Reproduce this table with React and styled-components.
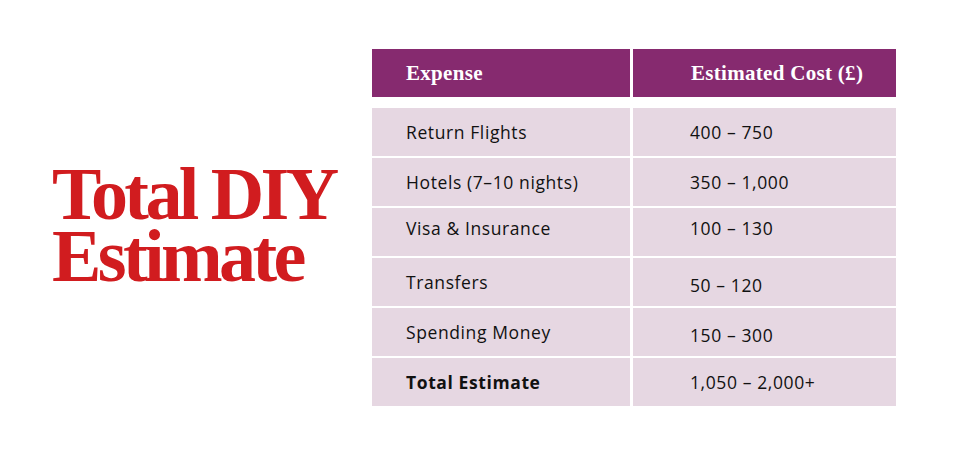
import { Fragment } from "react";
import styled, { createGlobalStyle } from "styled-components";

const GlobalStyle = createGlobalStyle`
  html, body {
    margin: 0;
    padding: 0;
    background: #ffffff;
  }
`;

const Page = styled.div`
  display: flex;
  align-items: flex-start;
  width: 960px;
  height: 450px;
  box-sizing: border-box;
  padding: 49px 0 0 52px;
`;

const Title = styled.h1`
  width: 320px;
  margin: 114px 0 0;
  color: #d11c1f;
  font-family: "Liberation Serif", "Times New Roman", serif;
  font-size: 74px;
  font-weight: 700;
  line-height: 62px;
  letter-spacing: -3.6px;
`;

const Table = styled.div`
  display: grid;
  grid-template-columns: 258px 263px;
  column-gap: 3px;
  row-gap: 2px;
  width: 524px;
`;

const HeadCell = styled.div`
  display: flex;
  align-items: center;
  height: 48px;
  margin-bottom: 9px;
  padding-left: ${(p) => p.$pad}px;
  background: #862a6f;
  color: #ffffff;
  font-family: "Liberation Serif", "Times New Roman", serif;
  font-size: 21px;
  font-weight: 700;
  letter-spacing: 0.3px;
`;

/* $shift moves the text centre up or down by that many px */
const Cell = styled.div`
  display: flex;
  align-items: center;
  height: 48px;
  box-sizing: border-box;
  padding-left: ${(p) => p.$pad}px;
  padding-top: ${(p) => Math.max(0, (p.$shift || 0) * 2)}px;
  padding-bottom: ${(p) => Math.max(0, -(p.$shift || 0) * 2)}px;
  background: #e6d7e2;
  color: #111111;
  font-family: "Open Sans", "Noto Sans", sans-serif;
  font-size: 17.5px;
  font-weight: ${(p) => (p.$bold ? 700 : 400)};
  letter-spacing: 0.6px;
`;

const rows = [
  ["Return Flights", "400 – 750", 0, 0],
  ["Hotels (7–10 nights)", "350 – 1,000", 0, 0],
  ["Visa & Insurance", "100 – 130", -4, -4],
  ["Transfers", "50 – 120", 0, 3],
  ["Spending Money", "150 – 300", 0, 3],
];

export default function App() {
  return (
    <>
      <GlobalStyle />
      <Page>
        <Title>Total DIY Estimate</Title>
        <Table>
          <HeadCell $pad={34}>Expense</HeadCell>
          <HeadCell $pad={58}>Estimated Cost (£)</HeadCell>
          {rows.map(([name, cost, s1, s2]) => (
            <Fragment key={name}>
              <Cell $pad={34} $shift={s1}>
                {name}
              </Cell>
              <Cell $pad={57} $shift={s2}>
                {cost}
              </Cell>
            </Fragment>
          ))}
          <Cell $pad={34} $bold>
            Total Estimate
          </Cell>
          <Cell $pad={57}>1,050 – 2,000+</Cell>
        </Table>
      </Page>
    </>
  );
}
